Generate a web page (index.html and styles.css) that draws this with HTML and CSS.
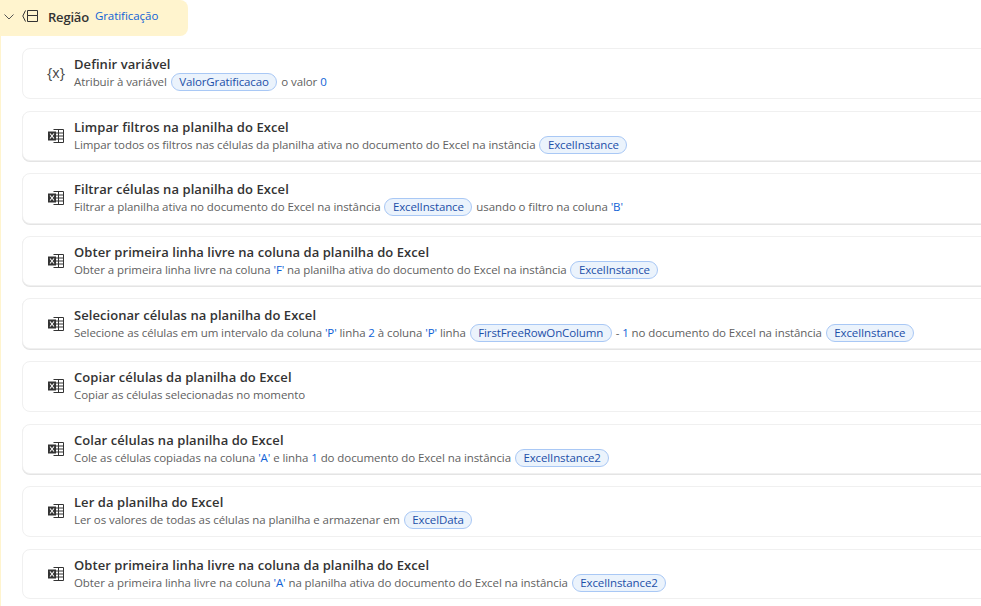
FILE: index.html
```html
<!DOCTYPE html>
<html lang="pt-BR">
<head>
<meta charset="utf-8">
<title>Região Gratificação</title>
<link rel="stylesheet" href="styles.css">
</head>
<body>
<svg class="defs" width="0" height="0" aria-hidden="true">
  <symbol id="excel" viewBox="0 0 16 16">
    <path d="M5.500 1.500h10v13h-10M5.500 5h10M5.500 8h10M5.500 11h10M10.500 1.500v13" fill="none" stroke="#333" stroke-width="1"/>
    <rect x="0" y="3.500" width="8" height="9" fill="#333"/>
    <path d="M2 5.500l4 5M6 5.500l-4 5" stroke="#fff" stroke-width="1.100" fill="none"/>
  </symbol>
</svg>
<div class="region-strip">
  <header class="region">
    <svg class="chevron" viewBox="0 0 10 6" width="10" height="6"><path d="M.5.500 5 5 9.500.5" fill="none" stroke="#555" stroke-width="1"/></svg>
    <svg class="region-icon" viewBox="0 0 16 12" width="16" height="12"><path d="M3.500.5.800 6l2.700 5.500M5.500.5h10v5h-10zM5.500 5.500h10v6h-10z" fill="none" stroke="#333" stroke-width="1"/></svg>
    <span class="region-label">Região</span>
    <span class="region-name">Gratificação</span>
  </header>
  <main class="list">
    <article class="card">
      <span class="icon var-icon">{x}</span>
      <div class="body"><h2>Definir variável</h2><p>Atribuir à variável <span class="pill">ValorGratificacao</span> o valor <b>0</b></p></div>
    </article>
    <article class="card raised">
      <svg class="icon"><use href="#excel"/></svg>
      <div class="body"><h2>Limpar filtros na planilha do Excel</h2><p>Limpar todos os filtros nas células da planilha ativa no documento do Excel na instância <span class="pill">ExcelInstance</span></p></div>
    </article>
    <article class="card raised">
      <svg class="icon"><use href="#excel"/></svg>
      <div class="body"><h2>Filtrar células na planilha do Excel</h2><p>Filtrar a planilha ativa no documento do Excel na instância <span class="pill">ExcelInstance</span> usando o filtro na coluna <b>'B'</b></p></div>
    </article>
    <article class="card raised">
      <svg class="icon"><use href="#excel"/></svg>
      <div class="body"><h2>Obter primeira linha livre na coluna da planilha do Excel</h2><p>Obter a primeira linha livre na coluna <b>'F'</b> na planilha ativa do documento do Excel na instância <span class="pill">ExcelInstance</span></p></div>
    </article>
    <article class="card raised">
      <svg class="icon"><use href="#excel"/></svg>
      <div class="body"><h2>Selecionar células na planilha do Excel</h2><p>Selecione as células em um intervalo da coluna <b>'P'</b> linha <b>2</b> à coluna <b>'P'</b> linha <span class="pill">FirstFreeRowOnColumn</span> - <b>1</b> no documento do Excel na instância <span class="pill">ExcelInstance</span></p></div>
    </article>
    <article class="card">
      <svg class="icon"><use href="#excel"/></svg>
      <div class="body"><h2>Copiar células da planilha do Excel</h2><p>Copiar as células selecionadas no momento</p></div>
    </article>
    <article class="card raised">
      <svg class="icon"><use href="#excel"/></svg>
      <div class="body"><h2>Colar células na planilha do Excel</h2><p>Cole as células copiadas na coluna <b>'A'</b> e linha <b>1</b> do documento do Excel na instância <span class="pill">ExcelInstance2</span></p></div>
    </article>
    <article class="card">
      <svg class="icon"><use href="#excel"/></svg>
      <div class="body"><h2>Ler da planilha do Excel</h2><p>Ler os valores de todas as células na planilha e armazenar em <span class="pill">ExcelData</span></p></div>
    </article>
    <article class="card">
      <svg class="icon"><use href="#excel"/></svg>
      <div class="body"><h2>Obter primeira linha livre na coluna da planilha do Excel</h2><p>Obter a primeira linha livre na coluna <b>'A'</b> na planilha ativa do documento do Excel na instância <span class="pill">ExcelInstance2</span></p></div>
    </article>
  </main>
</div>
</body>
</html>
```
FILE: styles.css
```css
* { box-sizing: border-box; }
html, body { margin: 0; height: 100%; overflow: hidden; background: #fff; }
body { font-family: "Open Sans", "Noto Sans", sans-serif; color: #242424; }
.defs { display: block; height: 0; }
.region-strip {
  height: 606px;
  border-left: 1px solid #fff4ce;
}
.region {
  width: 188px;
  height: 36px;
  margin-left: -1px;
  background: #fff4ce;
  border-radius: 0 8px 8px 0;
  display: flex;
  align-items: center;
  padding-left: 4px;
}
.chevron { flex: none; margin-top: -3px; }
.region-icon { margin-left: 8px; flex: none; margin-top: -4px; }
.region-label { margin-left: 10px; font-size: 13px; font-weight: 600; color: #333; letter-spacing: -.2px; margin-top: -2px; }
.region-name { margin-left: 6px; font-size: 11.500px; color: #0f62d6; letter-spacing: -.05px; margin-top: -6px; }
.list {
  padding: 12px 0 0 21px;
  display: flex;
  flex-direction: column;
  gap: 12px;
  width: 1000px;
}
.card {
  height: 50.600px;
  border: 1px solid #f0f0f0;
  border-radius: 8px;
  background: #fff;
  display: flex;
  align-items: center;
  padding-left: 25px;
}
.raised { box-shadow: 0 1px 0 #e4e4e4; }
.icon { width: 16px; height: 16px; flex: none; }
.var-icon { font-size: 14px; line-height: 16px; color: #444; width: 16px; white-space: nowrap; display: flex; justify-content: center; }
.body { margin-left: 10px; padding-top: 1px; }
h2 { margin: 0; font-size: 13px; line-height: 17px; font-weight: 600; color: #333; letter-spacing: .06px; white-space: nowrap; }
p { margin: 0; font-size: 11.500px; line-height: 18px; color: #616161; letter-spacing: -.08px; white-space: nowrap; }
p b { font-weight: 400; color: #0f62d6; }
.pill {
  display: inline-block;
  height: 18px;
  line-height: 16px;
  padding: 0 7.500px;
  border: 1px solid #a9c8f5;
  border-radius: 9px;
  background: #ebf3fc;
  color: #1c4fa8;
  letter-spacing: -.12px;
  margin: 0 1px;
}
```
